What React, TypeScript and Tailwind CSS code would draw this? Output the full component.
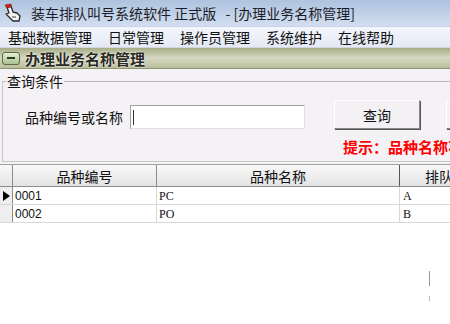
import React from "react";

const menus = ["基础数据管理", "日常管理", "操作员管理", "系统维护", "在线帮助"];

const rows = [
  { code: "0001", name: "PC", queue: "A", current: true },
  { code: "0002", name: "PO", queue: "B", current: false },
];

function AppIcon() {
  return (
    <svg width="20" height="20" viewBox="0 0 20 20">
      <path d="M4 4 L8 3 L10 9 L14 10 L17 13 L16 18 L10 18 L6 14 L3 11 L6 10 Z" fill="#f2f2f2" stroke="#2a2a2a" strokeWidth="1.3" strokeLinejoin="round" />
      <path d="M2 2 L8 1 L8 4 L4 5 Z" fill="#d81c1c" stroke="#7a1010" strokeWidth="0.6" />
      <path d="M9 14 L13 14" stroke="#444" strokeWidth="1" />
    </svg>
  );
}

export default function App() {
  return (
    <div
      className="w-[450px] h-[324px] overflow-hidden bg-[#f5f2f5] text-[#111] flex flex-col"
      style={{ fontFamily: '"Noto Sans CJK SC", "Liberation Sans", sans-serif' }}
    >
      {/* title bar */}
      <div className="h-[27px] shrink-0 flex items-center gap-[8px] pl-[3px] bg-gradient-to-b from-[#aec3df] to-[#d2def0] border-b border-[#c8d4e6]">
        <AppIcon />
        <span className="text-[14px] leading-none whitespace-nowrap text-[#1c1c28]">
          装车排队叫号系统软件 正式版&nbsp;&nbsp;&nbsp;- [办理业务名称管理]
        </span>
      </div>

      {/* menu bar */}
      <div className="h-[21px] shrink-0 flex items-center pl-[8px] gap-[16px] bg-gradient-to-b from-[#f4f6fc] to-[#e4e9f4] border-b border-[#d2d6de]">
        {menus.map((m) => (
          <span key={m} className="text-[14px] leading-none whitespace-nowrap">
            {m}
          </span>
        ))}
      </div>

      {/* child window caption */}
      <div className="h-[21px] shrink-0 flex items-center gap-[5px] pl-[2px] bg-gradient-to-b from-[#a7ad86] via-[#d6d9c2] to-[#b8bd9a] border-b border-[#8e9470]">
        <div className="w-[18px] h-[13px] rounded-[3px] border border-[#5c6a48] bg-gradient-to-b from-[#e8f0d8] to-[#a8c090] flex items-center justify-center">
          <div className="w-[8px] h-[2px] bg-[#2d4020]" />
        </div>
        <span
          className="text-[15px] leading-none font-bold text-[#2a2a22]"
          style={{ textShadow: "0 0 2px #fff, 0 0 1px #fff" }}
        >
          办理业务名称管理
        </span>
      </div>

      {/* query group */}
      <div className="relative shrink-0 ml-[2px] w-[480px] mt-[12px] h-[81px] border border-[#c8c4c8] border-t-[#bdb9bd]">
        <span className="absolute -top-[9px] left-[3px] bg-[#f5f2f5] px-[1px] text-[14px] leading-[16px]">查询条件</span>
        <div className="flex items-end pt-[18px] pl-[22px]">
          <div className="h-[24px] shrink-0 flex items-center">
            <span className="text-[14px] leading-none whitespace-nowrap">品种编号或名称</span>
          </div>
          <div className="ml-[7px] shrink-0 w-[175px] h-[24px] bg-white border border-[#a0a0a0] border-r-[#e0e0e0] border-b-[#e0e0e0] flex items-center pl-[2px]">
            <div className="w-[1px] h-[15px] bg-[#333]" />
          </div>
          <button className="ml-[29px] shrink-0 w-[86px] h-[29px] bg-[#f3f1f3] border border-[#888] border-t-[#fff] border-l-[#fff] shadow-[1px_1px_0_#555] text-[14px] leading-none">
            查询
          </button>
          <button className="ml-[26px] shrink-0 w-[86px] h-[29px] bg-[#f3f1f3] border border-[#888] border-t-[#fff] border-l-[#fff] shadow-[1px_1px_0_#555]" />
        </div>
        <div className="pl-[340px] pt-[10px] text-[15px] leading-none font-bold text-[#f00] whitespace-nowrap">
          提示：品种名称不能重复
        </div>
      </div>

      {/* grid */}
      <div className="mt-[2px] flex-1 bg-white border-t border-[#a0a0a0]">
        <div className="flex h-[22px] bg-gradient-to-b from-[#f8f8f8] to-[#e4e4e4] border-b border-[#8c8c8c] text-[14px] leading-none">
          <div className="w-[13px] shrink-0 border-r border-[#8c8c8c]" />
          <div className="w-[144px] shrink-0 border-r border-[#8c8c8c] flex items-center justify-center">品种编号</div>
          <div className="w-[243px] shrink-0 border-r border-[#555] flex items-center justify-center">品种名称</div>
          <div className="w-[120px] shrink-0 flex items-center pl-[25px] whitespace-nowrap">排队序号</div>
        </div>
        {rows.map((r) => (
          <div key={r.code} className="flex h-[18px] border-b border-[#d8d8d8] text-[12px] leading-none">
            <div className="w-[13px] shrink-0 border-r border-[#8c8c8c] bg-[#eeeeee] flex items-center justify-center">
              {r.current && (
                <svg width="7" height="10" viewBox="0 0 7 10">
                  <path d="M0 0 L7 5 L0 10 Z" fill="#000" />
                </svg>
              )}
            </div>
            <div
              className="w-[144px] shrink-0 border-r border-[#d8d8d8] flex items-center pl-[2px]"
              style={{ fontFamily: '"Liberation Sans", sans-serif' }}
            >
              {r.code}
            </div>
            <div
              className="w-[243px] shrink-0 border-r border-[#d8d8d8] flex items-center pl-[2px]"
              style={{ fontFamily: '"Liberation Serif", serif' }}
            >
              {r.name}
            </div>
            <div className="w-[120px] shrink-0 flex items-center pl-[3px]" style={{ fontFamily: '"Liberation Serif", serif' }}>
              {r.queue}
            </div>
          </div>
        ))}
        <div className="flex flex-col items-end pr-[20px] pt-[48px] gap-[10px]">
          <div className="w-[1px] h-[15px] bg-[#999]" />
          <div className="w-[1px] h-[5px] bg-[#bbb]" />
        </div>
      </div>
    </div>
  );
}
